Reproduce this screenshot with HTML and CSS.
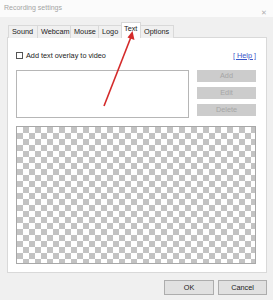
FILE: index.html
```html
<!DOCTYPE html>
<html>
<head>
<meta charset="utf-8">
<link rel="stylesheet" href="styles.css">
</head>
<body>
<div class="window">
  <div class="titlebar">
    <span class="title">Recording settings</span>
    <span class="close">✕</span>
  </div>
  <div class="body">
    <div class="tabs">
      <div class="tab">Sound</div>
      <div class="tab">Webcam</div>
      <div class="tab">Mouse</div>
      <div class="tab">Logo</div>
      <div class="tab active">Text</div>
      <div class="tab">Options</div>
    </div>
    <div class="panel">
      <div class="toprow">
        <label class="check"><span class="box"></span>Add text overlay to video</label>
        <a class="help">[ Help ]</a>
      </div>
      <div class="listrow">
        <div class="listbox"></div>
        <div class="btncol">
          <div class="dbtn">Add</div>
          <div class="dbtn">Edit</div>
          <div class="dbtn">Delete</div>
        </div>
      </div>
      <div class="checker"></div>
    </div>
    <div class="footer">
      <div class="btn">OK</div>
      <div class="btn">Cancel</div>
    </div>
  </div>
  <svg class="arrow" width="273" height="300" viewBox="0 0 273 300">
    <line x1="104" y1="106" x2="131" y2="37" stroke="#d42a2a" stroke-width="1.6"/>
    <polygon points="132.5,31 134.5,40 127.5,37.5" fill="#d42a2a"/>
  </svg>
</div>
</body>
</html>
```
FILE: styles.css
```css
* { box-sizing: border-box; }
html, body { margin: 0; padding: 0; }
body {
  width: 273px;
  height: 300px;
  background: #f0f0f0;
  font-family: "Liberation Sans", Arial, sans-serif;
  font-size: 7.3px;
  color: #222;
  overflow: hidden;
}
.window { position: relative; width: 273px; height: 300px; }
.titlebar {
  height: 17px;
  background: #fbfbfb;
  display: flex;
  align-items: center;
  justify-content: space-between;
  padding: 0 6px 0 4px;
}
.title { color: #a4a4a4; font-size: 7px; margin-top: -2px; }
.close { color: #b0b0b0; font-size: 7px; margin-top: 8px; }
.body { padding: 0 6px 0 7px; }
.tabs {
  display: flex;
  align-items: flex-end;
  height: 20px;
  padding-left: 1px;
  position: relative;
  z-index: 1;
}
.tab {
  height: 13px;
  line-height: 12px;
  padding: 0 3px;
  border: 1px solid #d9d9d9;
  border-bottom: none;
  margin-right: -1px;
  background: #f0f0f0;
  color: #222;
  margin-bottom: -1px;
}
.tab:nth-child(1) { width: 30px; }
.tab:nth-child(2) { width: 34px; }
.tab:nth-child(3) { width: 29px; }
.tab:nth-child(4) { width: 24px; }
.tab:nth-child(5) { width: 20px; }
.tab:nth-child(6) { width: 34px; }
.tab.active {
  height: 16px;
  background: #fff;
  line-height: 12px;
  padding-left: 2px;
  padding-right: 1px;
  position: relative;
}
.panel {
  height: 236px;
  background: #fff;
  border: 1px solid #d9d9d9;
  padding: 13px 9px 8px 8px;
  display: flex;
  flex-direction: column;
}
.toprow {
  display: flex;
  justify-content: space-between;
  align-items: center;
  height: 9px;
}
.check { display: flex; align-items: center; color: #222; }
.box {
  width: 7px; height: 7px;
  border: 1px solid #555;
  background: #fff;
  margin-right: 3px;
}
.help {
  color: #3a55c8;
  text-decoration: underline;
  margin-right: 1px;
}
.listrow {
  display: flex;
  gap: 8px;
  margin-top: 10px;
  height: 48px;
}
.listbox {
  width: 173px;
  height: 48px;
  border: 1px solid #b6b6b6;
  background: #fff;
}
.btncol { display: flex; flex-direction: column; gap: 5px; }
.dbtn {
  width: 59px;
  height: 12px;
  background: #cccccc;
  color: #a6a6a6;
  text-align: center;
  line-height: 12px;
}
.checker {
  margin-top: 8px;
  width: 240px;
  height: 139px;
  border: 1px solid #a8a8a8;
  background-color: #fff;
  background-image:
    linear-gradient(45deg, #c3c3c3 25%, transparent 25%, transparent 75%, #c3c3c3 75%),
    linear-gradient(45deg, #c3c3c3 25%, transparent 25%, transparent 75%, #c3c3c3 75%);
  background-size: 12px 12px;
  background-position: 0 0, 6px 6px;
}
.footer {
  display: flex;
  justify-content: flex-end;
  gap: 4px;
  margin-top: 7px;
}
.btn {
  height: 15px;
  line-height: 13px;
  border: 1px solid #adadad;
  background: #e1e1e1;
  text-align: center;
  color: #222;
}
.btn:nth-child(1) { width: 50px; }
.btn:nth-child(2) { width: 49px; }
.arrow { position: absolute; left: 0; top: 0; pointer-events: none; z-index: 5; }
```
